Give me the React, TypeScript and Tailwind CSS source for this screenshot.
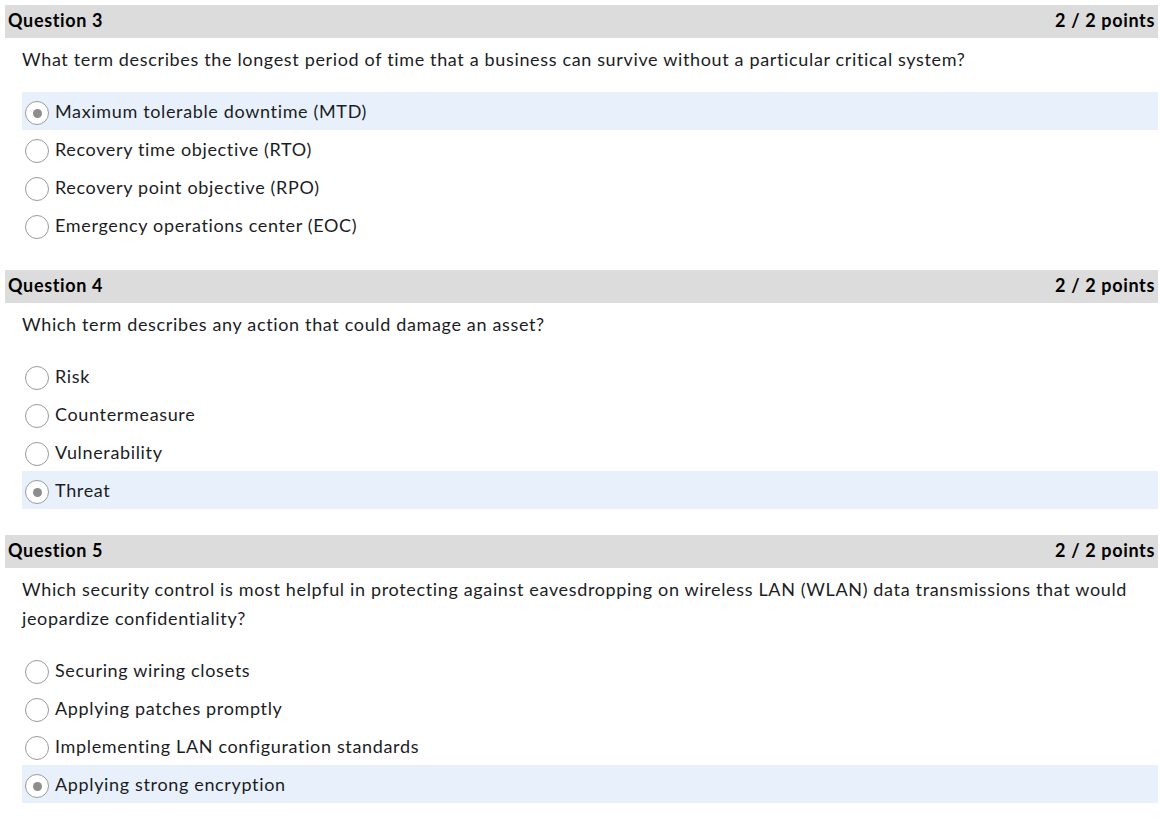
import React from "react";

type Question = {
  num: number;
  text: string;
  options: string[];
  selected: number;
};

const questions: Question[] = [
  {
    num: 3,
    text: "What term describes the longest period of time that a business can survive without a particular critical system?",
    options: [
      "Maximum tolerable downtime (MTD)",
      "Recovery time objective (RTO)",
      "Recovery point objective (RPO)",
      "Emergency operations center (EOC)",
    ],
    selected: 0,
  },
  {
    num: 4,
    text: "Which term describes any action that could damage an asset?",
    options: ["Risk", "Countermeasure", "Vulnerability", "Threat"],
    selected: 3,
  },
  {
    num: 5,
    text: "Which security control is most helpful in protecting against eavesdropping on wireless LAN (WLAN) data transmissions that would jeopardize confidentiality?",
    options: [
      "Securing wiring closets",
      "Applying patches promptly",
      "Implementing LAN configuration standards",
      "Applying strong encryption",
    ],
    selected: 3,
  },
];

function Radio({ checked }: { checked: boolean }) {
  return (
    <span className="mt-[9px] flex h-[24px] w-[24px] shrink-0 items-center justify-center rounded-full border border-[#9a9a9a] bg-white">
      {checked && <span className="h-[9px] w-[9px] rounded-full bg-[#8d8d8d]" />}
    </span>
  );
}

export default function App() {
  return (
    <div
      className="min-h-screen bg-white pl-[5px] pr-[2px] pt-[5px] text-[#1c1d1f] tracking-[0.65px] [font-variant-ligatures:none]"
      style={{ fontFamily: "Lato, 'Noto Sans', sans-serif" }}
    >
      {questions.map((q) => (
        <div key={q.num} className="mb-[26px]">
          <div className="flex h-[33px] items-center justify-between bg-[#dcdcdc] px-[3px] pb-[2px] text-[18px] font-bold text-black">
            <span>Question {q.num}</span>
            <span>2 / 2 points</span>
          </div>
          <div className="pl-[17px]">
            <div className="mb-[17px] mt-[7px] pb-[1px] pr-[20px] text-[18px] leading-[29px]">{q.text}</div>
            {q.options.map((opt, i) => (
              <div
                key={opt}
                className={
                  "flex h-[38px] items-start gap-[6px] pl-[3px] " +
                  (i === q.selected ? "bg-[#e8f1fb]" : "")
                }
              >
                <Radio checked={i === q.selected} />
                <span className="pt-[5px] text-[18px] leading-[29px]">{opt}</span>
              </div>
            ))}
          </div>
        </div>
      ))}
    </div>
  );
}
